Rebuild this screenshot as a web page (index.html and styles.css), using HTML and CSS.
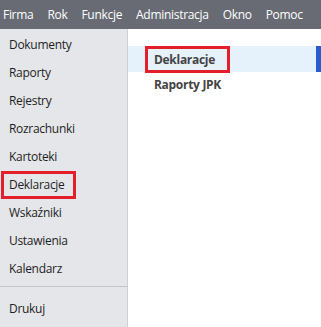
FILE: index.html
```html
<!DOCTYPE html>
<html lang="pl">
<head>
    <meta charset="UTF-8">
    <title>Deklaracje</title>
    <link rel="stylesheet" href="styles.css">
</head>
<body>
    <div class="menubar">
        <span class="menu-item">Firma</span>
        <span class="menu-item">Rok</span>
        <span class="menu-item">Funkcje</span>
        <span class="menu-item">Administracja</span>
        <span class="menu-item">Okno</span>
        <span class="menu-item">Pomoc</span>
    </div>
    <div class="main">
        <div class="sidebar">
            <div class="nav-item">Dokumenty</div>
            <div class="nav-item">Raporty</div>
            <div class="nav-item">Rejestry</div>
            <div class="nav-item">Rozrachunki</div>
            <div class="nav-item">Kartoteki</div>
            <div class="nav-item marked">Deklaracje</div>
            <div class="nav-item">Wskaźniki</div>
            <div class="nav-item">Ustawienia</div>
            <div class="nav-item">Kalendarz</div>
            <div class="separator"></div>
            <div class="nav-item">Drukuj</div>
        </div>
        <div class="content">
            <div class="sub-item active"><span class="marked">Deklaracje</span></div>
            <div class="sub-item">Raporty JPK</div>
        </div>
    </div>
</body>
</html>
```

FILE: styles.css
```css
* {
    box-sizing: border-box;
}

body {
    margin: 0;
    font-family: "Open Sans", "Noto Sans", sans-serif;
    font-size: 12px;
    letter-spacing: -0.3px;
    background-color: white;
}

.menubar {
    display: flex;
    height: 29px;
    align-items: center;
    background-color: #686b74;
}

.menu-item {
    color: white;
    padding: 0 7px 0 3px;
    margin-right: 4px;
}

.main {
    display: flex;
    height: 298px;
}

.sidebar {
    width: 128px;
    background-color: #e5e6ea;
    border-right: 1px solid #cfd0d4;
    padding-top: 2px;
}

.nav-item {
    height: 28px;
    line-height: 28px;
    padding-left: 9px;
    color: #1e1e1e;
}

.nav-item.marked {
    margin-left: 1px;
    padding-left: 5px;
    width: 75px;
    border: 3px solid #e3202a;
    line-height: 22px;
}

.separator {
    height: 1px;
    background-color: #c4c5ca;
    margin: 3px 0 8px;
}

.content {
    flex: 1;
    padding-top: 17px;
}

.sub-item {
    height: 26px;
    line-height: 26px;
    padding-left: 26px;
    font-weight: bold;
    color: #444;
}

.sub-item.active {
    background-color: #e5f1fb;
    border-right: 5px solid #2b5ccc;
}

.sub-item .marked {
    display: inline-block;
    height: 27px;
    line-height: 21px;
    margin-left: -9px;
    padding: 0 12px 0 6px;
    border: 3px solid #e3202a;
}
```
